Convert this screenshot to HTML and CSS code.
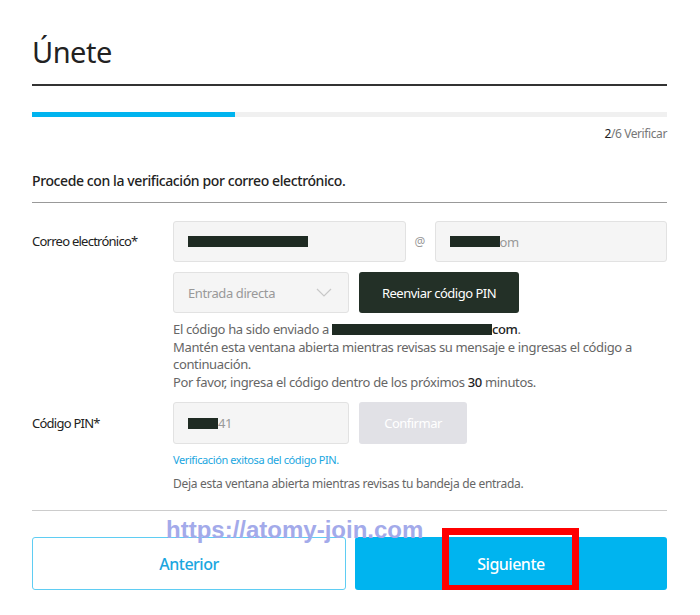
FILE: index.html
```html
<!DOCTYPE html>
<html>
<head>
  <meta charset="utf-8">
  <link rel="stylesheet" href="styles.css">
</head>
<body>
  <div class="page">
    <h1 class="title">Únete</h1>

    <div class="progress">
      <div class="progress-fill" style="width: 32%"></div>
    </div>
    <div class="step"><b>2</b>/6 Verificar</div>

    <div class="section-title">Procede con la verificación por correo electrónico.</div>

    <div class="form-block">
      <div class="form-label">Correo electrónico*</div>
      <div class="form-content">
        <div class="email-line">
          <div class="input"><span class="redact" style="width: 120px"></span></div>
          <span class="at">@</span>
          <div class="input"><span class="redact" style="width: 50px"></span>om</div>
        </div>
        <div class="action-line">
          <div class="select">
            <span>Entrada directa</span>
            <svg class="chevron" width="16" height="9" viewBox="0 0 16 9">
              <path d="M1 1l7 7 7-7" fill="none" stroke="#c8c8c8" stroke-width="1.2"/>
            </svg>
          </div>
          <button class="btn btn-dark">Reenviar código PIN</button>
        </div>
        <div class="message">
          El código ha sido enviado a <span class="redact redact-inline" style="width: 160px"></span><b>com</b>.<br>
          Mantén esta ventana abierta mientras revisas su mensaje e ingresas el código a continuación.<br>
          Por favor, ingresa el código dentro de los próximos <b>30</b> minutos.
        </div>
      </div>
    </div>

    <div class="form-block pin-block">
      <div class="form-label">Código PIN*</div>
      <div class="form-content">
        <div class="action-line">
          <div class="input input-pin"><span class="redact" style="width: 30px"></span>41</div>
          <button class="btn btn-disabled">Confirmar</button>
        </div>
        <div class="success">Verificación exitosa del código PIN.</div>
        <div class="note">Deja esta ventana abierta mientras revisas tu bandeja de entrada.</div>
      </div>
    </div>

    <div class="footer">
      <button class="btn btn-outline">Anterior</button>
      <button class="btn btn-primary">Siguiente</button>
      <div class="watermark">https://atomy-join.com</div>
      <div class="highlight"></div>
    </div>
  </div>
</body>
</html>
```

FILE: styles.css
```css
body {
  margin: 0;
  background: #fff;
  font-family: "Noto Sans", "Open Sans", sans-serif;
  color: #333;
}

.page {
  padding: 0 33px 0 32px;
}

.title {
  margin: 0;
  padding: 32px 0 12px;
  font-size: 29px;
  line-height: 40px;
  font-weight: 400;
  color: #222;
  letter-spacing: -0.5px;
  border-bottom: 2px solid #333;
}

.progress {
  margin-top: 26px;
  height: 5px;
  background: #f0f0f0;
}

.progress-fill {
  height: 100%;
  background: #00b4ef;
}

.step {
  margin-top: 9px;
  text-align: right;
  font-size: 12px;
  line-height: 16px;
  color: #777;
  letter-spacing: -0.4px;
}

.step b {
  font-weight: 400;
  color: #222;
}

.section-title {
  margin-top: 29px;
  padding-bottom: 11px;
  font-size: 14px;
  line-height: 20px;
  font-weight: 500;
  color: #222;
  letter-spacing: -0.4px;
  border-bottom: 1px solid #999;
}

.form-block {
  display: grid;
  grid-template-columns: 141px 1fr;
  margin-top: 18px;
}

.pin-block {
  margin-top: 11px;
}

.form-label {
  font-size: 13px;
  line-height: 41px;
  color: #222;
  letter-spacing: -0.75px;
}

.pin-block .form-label {
  line-height: 42px;
}

.email-line {
  display: grid;
  grid-template-columns: 1fr 29px 1fr;
}

.action-line {
  display: flex;
  gap: 10px;
  margin-top: 10px;
}

.pin-block .action-line {
  margin-top: 0;
}

.input,
.select {
  box-sizing: border-box;
  height: 41px;
  display: flex;
  align-items: center;
  padding: 0 14px;
  background: #f5f5f5;
  border: 1px solid #e2e2e2;
  border-radius: 3px;
  font-size: 13px;
  color: #999;
  letter-spacing: -0.4px;
}

.input-pin {
  width: 176px;
  height: 42px;
}

.at {
  text-align: center;
  font-size: 12px;
  line-height: 41px;
  color: #999;
}

.redact {
  display: inline-block;
  height: 11px;
  background: #1f2b23;
}

.redact-inline {
  vertical-align: -1px;
}

.select {
  width: 176px;
  justify-content: space-between;
}

.chevron {
  margin-right: 2px;
}

.btn {
  box-sizing: border-box;
  border: none;
  border-radius: 3px;
  font-family: inherit;
  font-size: 13px;
  letter-spacing: -0.5px;
  cursor: pointer;
}

.btn-dark {
  width: 160px;
  height: 41px;
  background: #233027;
  color: #fff;
}

.btn-disabled {
  width: 108px;
  height: 42px;
  background: #e1e1e6;
  color: #fff;
}

.message {
  margin-top: 8px;
  font-size: 13px;
  line-height: 17.5px;
  color: #666;
  letter-spacing: -0.35px;
}

.message b {
  font-weight: 500;
  color: #222;
}

.success {
  margin-top: 8px;
  font-size: 11px;
  line-height: 16px;
  color: #1aa6e0;
  letter-spacing: -0.4px;
}

.note {
  margin-top: 7px;
  padding-bottom: 18px;
  font-size: 12px;
  line-height: 17px;
  color: #666;
  letter-spacing: -0.3px;
}

.footer {
  position: relative;
  display: flex;
  gap: 9px;
  padding-top: 26px;
  border-top: 1px solid #ccc;
}

.footer .btn {
  flex: 1;
  height: 53px;
  font-size: 16px;
  font-weight: 500;
}

.btn-outline {
  background: #fff;
  border: 1px solid #5fcdf3;
  color: #1aa6e0;
}

.btn-primary {
  background: #00b4ef;
  color: #fff;
}

.watermark {
  position: absolute;
  left: 134px;
  top: 5px;
  font-family: "Liberation Sans", Arial, sans-serif;
  font-size: 24px;
  font-weight: bold;
  color: #a3aaea;
  pointer-events: none;
}

.highlight {
  position: absolute;
  left: 410px;
  top: 17px;
  width: 137px;
  height: 64px;
  box-sizing: border-box;
  border: 7px solid #ff0000;
  pointer-events: none;
}
```
